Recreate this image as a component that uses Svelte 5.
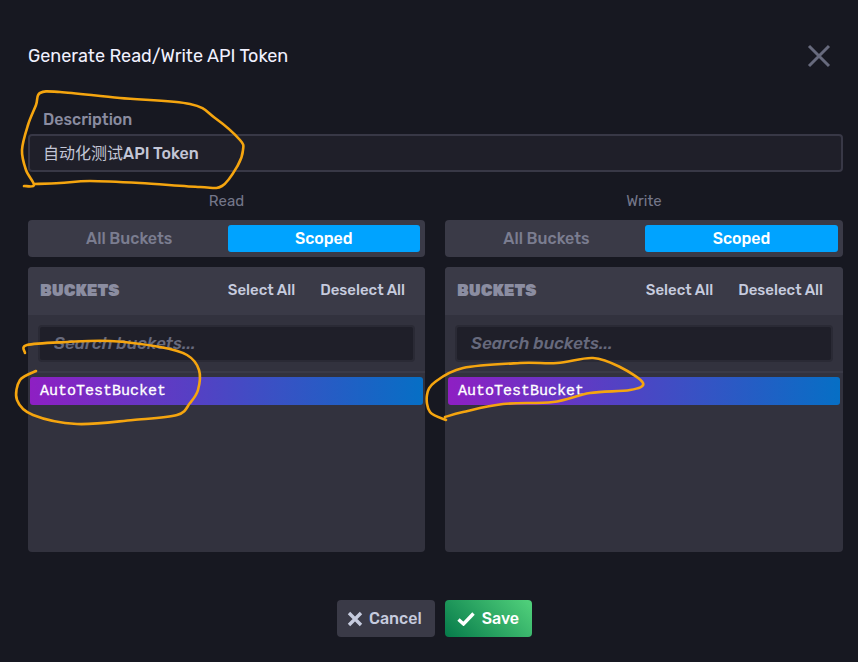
<script>
    const columns = ["Read", "Write"];

    // hand-drawn annotations over the page
    const scribbles = [
        [[24,186],[34,185],[26,170],[22,150],[28,125],[36,105],[40,93],[60,92],[120,98],[190,104],[215,118],[240,140],[243,150],[238,165],[222,186],[200,187],[140,183],[90,181],[60,183],[34,184]],
        [[25,353],[27,345],[67,342],[110,341],[160,347],[187,355],[199,370],[198,390],[190,403],[177,415],[133,420],[77,424],[33,415],[17,400],[20,380],[36,371]],
        [[446,420],[430,412],[427,395],[435,382],[463,368],[520,363],[557,363],[593,358],[620,367],[643,383],[630,390],[590,393],[553,402],[503,404],[463,412],[445,417]],
    ];

    function smooth(p) {
        let d = `M${p[0][0]},${p[0][1]}`;
        for (let i = 0; i < p.length - 1; i++) {
            const a = p[i - 1] || p[i];
            const b = p[i];
            const c = p[i + 1];
            const e = p[i + 2] || c;
            d += ` C${b[0] + (c[0] - a[0]) / 6},${b[1] + (c[1] - a[1]) / 6} ${c[0] - (e[0] - b[0]) / 6},${c[1] - (e[1] - b[1]) / 6} ${c[0]},${c[1]}`;
        }
        return d;
    }
</script>

<main>
    <header class="head">
        <h1>Generate Read/Write API Token</h1>
        <button class="close" aria-label="Close">
            <svg width="24" height="24" viewBox="0 0 24 24"><path d="M2 2 L22 22 M22 2 L2 22" /></svg>
        </button>
    </header>

    <section class="desc">
        <div class="desc-label">Description</div>
        <div class="desc-value"><span class="cjk">自动化测试</span>API Token</div>
    </section>

    <div class="columns">
        {#each columns as col}
            <div class="col">
                <div class="col-label">{col}</div>
                <div class="toggle">
                    <span class="opt">All Buckets</span>
                    <span class="opt active">Scoped</span>
                </div>
                <div class="panel">
                    <div class="panel-head">
                        <span class="panel-title">BUCKETS</span>
                        <span class="link first">Select All</span>
                        <span class="link">Deselect All</span>
                    </div>
                    <div class="search-row">
                        <input type="text" placeholder="Search buckets..." />
                    </div>
                    <div class="list">
                        <div class="item">AutoTestBucket</div>
                    </div>
                </div>
            </div>
        {/each}
    </div>

    <footer class="actions">
        <button class="btn cancel">
            <svg width="16" height="16" viewBox="0 0 16 16"><path d="M2 2 L14 14 M14 2 L2 14" /></svg>
            Cancel
        </button>
        <button class="btn save">
            <svg width="18" height="14" viewBox="0 0 18 14"><path d="M1.5 7.5 L6.5 12 L16.5 1.5" /></svg>
            Save
        </button>
    </footer>

    <svg class="ink" width="858" height="662" viewBox="0 0 858 662">
        {#each scribbles as s}
            <path d={smooth(s)} />
        {/each}
    </svg>
</main>

<style>
    :global(body) {
        background: #171821;
        font-family: Rubik, Inter, "Noto Sans CJK SC", sans-serif;
    }
    main {
        position: relative;
        box-sizing: border-box;
        height: 662px;
        padding: 0 15px 0 28px;
        overflow: hidden;
    }
    .head {
        display: flex;
        justify-content: space-between;
        align-items: center;
        height: 112px;
    }
    h1 {
        margin: 0;
        font-size: 18px;
        font-weight: 400;
        color: #f1f1ff;
    }
    .close {
        display: flex;
        padding: 0;
        margin-right: 12px;
        background: none;
        border: none;
    }
    .close path {
        stroke: #676a7d;
        stroke-width: 3;
        fill: none;
    }
    .desc-label {
        height: 22px;
        padding-left: 15px;
        font-size: 16px;
        line-height: 15px;
        font-weight: 500;
        color: #8a8ca0;
    }
    .desc-value {
        box-sizing: border-box;
        height: 38px;
        padding: 0 13px;
        background: #1f1f29;
        border: 2px solid #383846;
        border-radius: 4px;
        font-size: 16px;
        font-weight: 500;
        line-height: 35px;
        letter-spacing: 0.1px;
        color: #c3c6d6;
    }
    .cjk {
        font-weight: 400;
        letter-spacing: 0;
    }
    .columns {
        display: grid;
        grid-template-columns: 397px 398px;
        gap: 20px;
    }
    .col-label {
        height: 48px;
        padding-top: 20px;
        box-sizing: border-box;
        text-align: center;
        font-size: 15px;
        line-height: 18px;
        color: #747689;
    }
    .toggle {
        display: grid;
        grid-template-columns: 1fr 1fr;
        gap: 2px;
        box-sizing: border-box;
        height: 37px;
        padding: 5px;
        background: #3a3a47;
        border-radius: 4px;
    }
    .opt {
        display: flex;
        align-items: center;
        justify-content: center;
        border-radius: 3px;
        font-size: 16px;
        font-weight: 500;
        color: #7b7d90;
    }
    .opt.active {
        background: #00a3ff;
        color: #fff;
    }
    .panel {
        display: flex;
        flex-direction: column;
        height: 285px;
        margin-top: 10px;
        background: #32323e;
        border-radius: 4px;
        overflow: hidden;
    }
    .panel-head {
        display: flex;
        align-items: center;
        flex: 0 0 48px;
        padding: 0 20px 2px 12px;
        box-sizing: border-box;
        background: #3a3a47;
        font-size: 15px;
        font-weight: 500;
        color: #c6cbde;
    }
    .panel-title {
        font-size: 16px;
        font-weight: 900;
        color: #8b8da1;
    }
    .link.first {
        margin-left: auto;
        margin-right: 25px;
    }
    .search-row {
        flex: 0 0 58px;
        box-sizing: border-box;
        padding: 10px 10px 0 10px;
        border-bottom: 2px solid #3a3a47;
    }
    .search-row input {
        display: block;
        box-sizing: border-box;
        width: 100%;
        height: 37px;
        padding: 0 14px 2px;
        background: #1f1f29;
        border: 2px solid #2a2a35;
        border-radius: 4px;
        outline: none;
        font: italic 500 17px Rubik, Inter, sans-serif;
        color: #c3c6d6;
    }
    .search-row input::placeholder {
        color: #676a7d;
        opacity: 1;
    }
    .list {
        padding: 4px 2px 0;
    }
    .col:last-child .list {
        padding: 4px 3px 0;
    }
    .item {
        height: 28px;
        padding-left: 10px;
        border-radius: 3px;
        background: linear-gradient(90deg, #8e1fc3, #066fc5);
        font: 500 15px/29px "Liberation Mono", monospace;
        -webkit-text-stroke: 0.3px #fff;
        color: #fff;
    }
    .actions {
        display: flex;
        justify-content: center;
        gap: 10px;
        padding-top: 48px;
        padding-right: 2px;
    }
    .btn {
        display: flex;
        align-items: center;
        height: 37px;
        border: none;
        border-radius: 4px;
        font: 500 16px Rubik, Inter, sans-serif;
    }
    .btn path {
        fill: none;
        stroke-width: 3.4;
    }
    .cancel {
        gap: 6px;
        padding: 0 13px 0 10px;
        background: #3a3a47;
        color: #c6cbde;
    }
    .cancel path {
        stroke: #c6cbde;
    }
    .save {
        gap: 7px;
        padding: 0 13px 0 12px;
        background: linear-gradient(45deg, #067a4a, #52d27c);
        color: #fff;
    }
    .save path {
        stroke: #fff;
    }
    .ink {
        position: absolute;
        top: 0;
        left: 0;
        pointer-events: none;
    }
    .ink path {
        fill: none;
        stroke: #f5a50f;
        stroke-width: 2.6;
        stroke-linecap: round;
        stroke-linejoin: round;
    }
</style>
